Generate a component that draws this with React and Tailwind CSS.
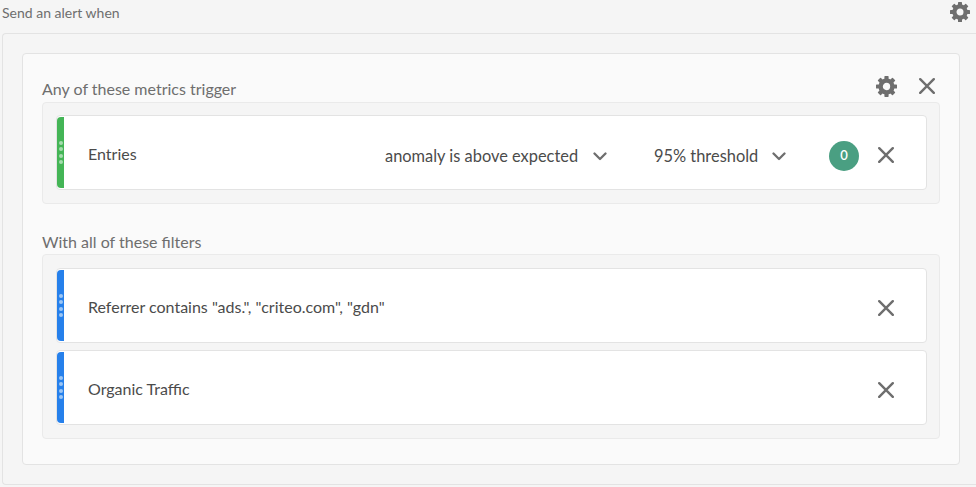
const font = { fontFamily: 'Lato, sans-serif' }

function Gear({ className }) {
  return (
    <svg viewBox="0 0 20 20" className={className} fill="#6e6e6e">
      {[0, 45, 90, 135, 180, 225, 270, 315].map((a) => (
        <rect key={a} x="8" y="0" width="4" height="5" rx="0.6" transform={`rotate(${a} 10 10)`} />
      ))}
      <circle cx="10" cy="10" r="5.6" fill="none" stroke="#6e6e6e" strokeWidth="4.2" />
    </svg>
  )
}

function Cross({ className }) {
  return (
    <svg viewBox="0 0 16 16" className={className} stroke="#6e6e6e" strokeWidth="2.4" strokeLinecap="round">
      <path d="M1.2 1.2L14.8 14.8M14.8 1.2L1.2 14.8" />
    </svg>
  )
}

function Chevron() {
  return (
    <svg viewBox="0 0 14 9" className="w-[14px] h-[9px]" fill="none" stroke="#6e6e6e" strokeWidth="2.3" strokeLinecap="round" strokeLinejoin="round">
      <path d="M1.5 1.5L7 7L12.5 1.5" />
    </svg>
  )
}

function Card({ bar, dots, children }) {
  return (
    <div className="h-[75px] flex rounded-[4px] border border-[#e3e3e3] bg-white pr-[32px]">
      <div className={`w-[7px] my-px rounded-l-[4px] flex flex-col items-center justify-center gap-[2.5px] ${bar}`}>
        {[0, 1, 2, 3].map((i) => (
          <span key={i} className={`w-1 h-1 rounded-full ${dots}`} />
        ))}
      </div>
      <div className="flex-1 flex items-center pl-[24px] pt-[2px] text-[16px] text-[#4b4b4b]">{children}</div>
      <div className="flex items-center pt-[4px]">
        <Cross className="w-4 h-4" />
      </div>
    </div>
  )
}

export default function App() {
  return (
    <div className="w-[976px] h-[487px] bg-[#f5f5f5] overflow-hidden" style={font}>
      <div className="h-[33px] flex justify-between pl-[2px] pr-[6px] pt-[3px]">
        <span className="text-[14px] leading-5 text-[#6e6e6e]">Send an alert when</span>
        <Gear className="w-5 h-5 mt-[-1px]" />
      </div>

      <div className="ml-[2px] h-[452px] border border-r-0 border-[#e3e3e3] rounded-l-[4px] pl-[19px] pt-[19px] bg-[#f5f5f5]">
        <div className="w-[938px] h-[412px] rounded-[4px] border border-[#e3e3e3] bg-[#fafafa] px-[19px] pt-[20px]">
          <div className="flex justify-between h-[28px] pr-[3px]">
            <span className="text-[16px] leading-[30px] text-[#6e6e6e]">Any of these metrics trigger</span>
            <div className="flex items-center gap-[19px] pb-[4px] pr-[2px]">
              <Gear className="w-[21px] h-[21px] -translate-x-[3px]" />
              <Cross className="w-[16px] h-[16px]" />
            </div>
          </div>

          <div className="w-[898px] h-[102px] rounded-[4px] border border-[#eaeaea] bg-[#f5f5f5] pl-[13px] pr-[12px] pt-[12px]">
            <Card bar="bg-[#44b556]" dots="bg-[#a5dcae]">
              <span className="flex-1">Entries</span>
              <span className="flex items-center gap-[15px] w-[269px] mt-[6px] text-[16.4px]">
                anomaly is above expected
                <Chevron />
              </span>
              <span className="flex items-center gap-[14px] w-[175px] mt-[6px] text-[16.4px]">
                95% threshold
                <Chevron />
              </span>
              <span className="w-[30px] h-[30px] mr-[19px] mt-[4px] rounded-full bg-[#4a9f82] text-white text-[13px] font-semibold flex items-center justify-center">
                0
              </span>
            </Card>
          </div>

          <div className="h-[50px] pt-[27px] text-[16px] leading-[22px] text-[#6e6e6e]">With all of these filters</div>

          <div className="w-[898px] h-[185px] rounded-[4px] border border-[#eaeaea] bg-[#f5f5f5] pl-[13px] pr-[12px] pt-[13px] flex flex-col gap-[7px]">
            <Card bar="bg-[#2680eb]" dots="bg-[#9cc6f5]">
              Referrer contains "ads.", "criteo.com", "gdn"
            </Card>
            <Card bar="bg-[#2680eb]" dots="bg-[#9cc6f5]">
              Organic Traffic
            </Card>
          </div>
        </div>
      </div>
    </div>
  )
}
